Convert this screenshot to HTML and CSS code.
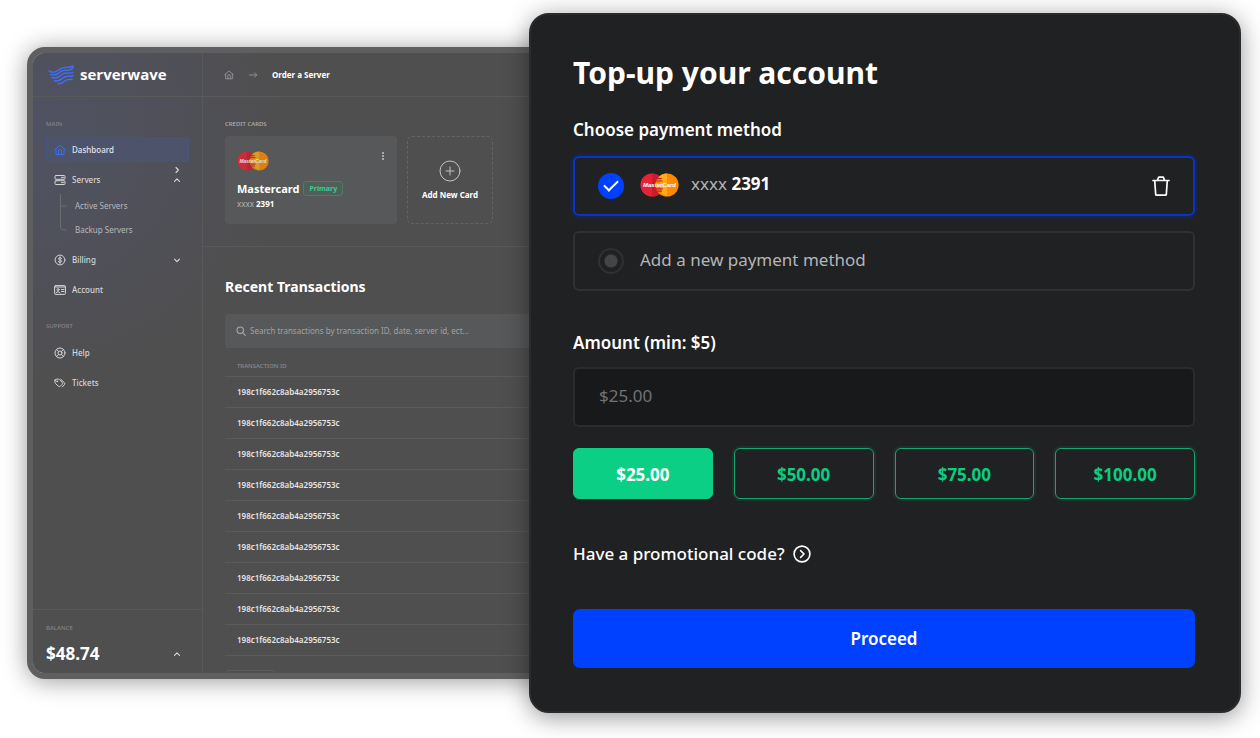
FILE: index.html
```html
<!DOCTYPE html>
<html lang="en">
<head>
<meta charset="utf-8">
<title>Serverwave – Top-up your account</title>
<link rel="stylesheet" href="styles.css">
</head>
<body>
<svg class="defs" aria-hidden="true">
  <symbol id="mastercard" viewBox="0 0 39 24">
    <circle cx="12" cy="12" r="11.6" fill="#e62335"/>
    <path d="M12 .4a11.6 11.6 0 0 1 0 23.2z" fill="#c81e2b"/>
    <circle cx="27" cy="12" r="11.6" fill="#ff8a00"/>
    <path d="M27 .4a11.6 11.6 0 0 0-8 3.2l3 16.9 5 3.1z" fill="#ffab1a"/>
    <path d="M17.300 5.600h4M16.300 8h6M16 15.800h6.300M17.300 18.200h4" stroke="#c81e2b" stroke-width="1.200"/>
    <text x="19.500" y="14.300" text-anchor="middle" class="mc-name">MasterCard</text>
  </symbol>
  <symbol id="home" viewBox="0 0 12 12"><path d="M.8 5.600 6 1.200l5.200 4.400M2 5v5.600h8V5M4.500 10.400V7a1.500 1.500 0 0 1 3 0v3.400"/></symbol>
  <symbol id="up" viewBox="0 0 10 10"><path d="M2.500 6.300 5 3.900l2.500 2.400"/></symbol>
</svg>
<div class="stage">
  <div class="dashboard">
    <aside class="sidebar">
      <a class="brand" href="#">
        <svg class="logo" viewBox="0 0 26 20"><path d="M1 6c4 2 7.200 1.500 10.200-1.500S18 3.500 25 1c0 2-1 3.500-3 3.800M2.500 9.300c3.800 1.500 7 .4 9.800-2.400C15.600 3.600 18.500 6.500 23.500 4.300M4 12.500c3.600 1.200 6.800.1 9.700-2.700C17 6.600 20 9.300 25 7.400M6.500 15.700c3 .8 6-.4 8.500-2.800 3.300-3.200 6-.8 10-2.200M10 18.700c2.400.4 4.600-.7 6.700-2.700 2.500-2.400 4.500-1.200 7.300-1.800"/></svg>
        <span class="wordmark">serverwave</span>
      </a>
      <nav class="menu">
        <h2 class="caption">MAIN</h2>
        <a class="item active" href="#"><svg class="icon"><use href="#home"/></svg><span>Dashboard</span></a>
        <a class="item" href="#">
          <svg class="icon" viewBox="0 0 12 12"><rect x="1" y="1.500" width="10" height="3.800" rx="1"/><rect x="1" y="6.700" width="10" height="3.800" rx="1"/><path d="M7.500 3.400h2M7.500 8.600h2"/></svg>
          <span>Servers</span>
          <span class="chevrons"><svg class="chev" viewBox="0 0 10 10"><path d="M4 2.500 6.400 5 4 7.500"/></svg><svg class="chev"><use href="#up"/></svg></span>
        </a>
        <div class="submenu">
          <svg class="branch" viewBox="0 0 8 40"><path d="M1.500 0v33q0 3 3 3H7M1.500 12H7"/></svg>
          <div class="sublinks"><a class="sub" href="#">Active Servers</a><a class="sub" href="#">Backup Servers</a></div>
        </div>
        <a class="item" href="#">
          <svg class="icon" viewBox="0 0 12 12"><circle cx="6" cy="6" r="4.900"/><path d="M7.600 4.500Q7 3.700 6 3.700c-2 0-2 2 0 2.300 2.200.3 2.200 2.400 0 2.400Q5 8.400 4.400 7.600M6 2.800v6.500"/></svg>
          <span>Billing</span><svg class="chev end" viewBox="0 0 10 10"><path d="M2.500 4.200 5 6.600l2.500-2.400"/></svg>
        </a>
        <a class="item" href="#">
          <svg class="icon" viewBox="0 0 12 12"><rect x=".6" y="1.600" width="10.800" height="8.800" rx=".8"/><path d="M.6 3h10.800M7.500 5.500H10M7.500 7.500H10"/><circle cx="4" cy="5.600" r="1"/><path d="M2 8.600q2-2.400 4 0"/></svg>
          <span>Account</span>
        </a>
        <h2 class="caption support">SUPPORT</h2>
        <a class="item" href="#">
          <svg class="icon" viewBox="0 0 12 12"><circle cx="6" cy="6" r="5"/><circle cx="6" cy="6" r="2"/><path d="m2.500 2.500 2 2m3 3 2 2m0-7-2 2m-3 3-2 2"/></svg>
          <span>Help</span>
        </a>
        <a class="item" href="#">
          <svg class="icon" viewBox="0 0 12 12"><path d="M1 3.200v2.300q0 .6.500 1l2.800 2.700q1 .9 2 0l1.900-1.900q.9-1 0-2L5.500 2.600q-.4-.4-1-.4H2q-1 0-1 1zM6.800 2.300l3.500 3.300q1 1 0 2.200L8.300 9.900"/><circle cx="3.100" cy="4.300" r=".5"/></svg>
          <span>Tickets</span>
        </a>
      </nav>
      <div class="balance">
        <h2 class="caption">BALANCE</h2>
        <div class="balance-row"><strong>$48.74</strong><svg class="chev end"><use href="#up"/></svg></div>
      </div>
    </aside>
    <main class="content">
      <nav class="crumbs">
        <svg class="crumb"><use href="#home"/></svg>
        <svg class="crumb" viewBox="0 0 12 12"><path d="M1.500 6h9M8 3.500 10.500 6 8 8.500"/></svg>
        <span>Order a Server</span>
      </nav>
      <section class="cards">
        <h2 class="caption light">CREDIT CARDS</h2>
        <div class="card-list">
          <article class="card">
            <div class="card-top"><svg class="mc-small" role="img" aria-label="MasterCard"><use href="#mastercard"/></svg>
              <button class="more" aria-label="Card options"><svg viewBox="0 0 4 8"><circle cx="2" cy="1" r=".9"/><circle cx="2" cy="4" r=".9"/><circle cx="2" cy="7" r=".9"/></svg></button></div>
            <div class="card-name"><strong>Mastercard</strong><span class="tag">Primary</span></div>
            <div class="card-number"><span>xxxx</span> <b>2391</b></div>
          </article>
          <button class="add-card">
            <svg viewBox="0 0 22 22"><circle cx="11" cy="11" r="10"/><path d="M11 7v8M7 11h8"/></svg>
            <span>Add New Card</span>
          </button>
        </div>
      </section>
      <section class="transactions">
        <h1>Recent Transactions</h1>
        <label class="search">
          <svg viewBox="0 0 10 10"><circle cx="4.200" cy="4.200" r="3.200"/><path d="m6.600 6.600 2.700 2.700"/></svg>
          <input type="search" aria-label="Search transactions" placeholder="Search transactions by transaction ID, date, server id, ect...">
        </label>
        <table>
          <thead><tr><th>TRANSACTION ID</th></tr></thead>
          <tbody>
            <tr><td>198c1f662c8ab4a2956753c</td></tr>
            <tr><td>198c1f662c8ab4a2956753c</td></tr>
            <tr><td>198c1f662c8ab4a2956753c</td></tr>
            <tr><td>198c1f662c8ab4a2956753c</td></tr>
            <tr><td>198c1f662c8ab4a2956753c</td></tr>
            <tr><td>198c1f662c8ab4a2956753c</td></tr>
            <tr><td>198c1f662c8ab4a2956753c</td></tr>
            <tr><td>198c1f662c8ab4a2956753c</td></tr>
            <tr><td>198c1f662c8ab4a2956753c</td></tr>
          </tbody>
        </table>
        <button class="pager" aria-label="Rows per page"></button>
      </section>
    </main>
  </div>

  <form class="modal">
    <h1>Top-up your account</h1>
    <fieldset class="methods">
      <legend>Choose payment method</legend>
      <div class="method selected">
        <input type="radio" name="method" id="saved" checked>
        <label for="saved"><svg class="mc-large" role="img" aria-label="MasterCard"><use href="#mastercard"/></svg><span class="masked"><span>xxxx</span> <b>2391</b></span></label>
        <button type="button" class="trash" aria-label="Delete card"><svg viewBox="0 0 18 20"><path d="M1 4.500h16M2.700 4.500l1 14a.8.8 0 0 0 .8.700h9a.8.8 0 0 0 .8-.7l1-14M5.500 4.300l.8-2.400a1 1 0 0 1 .9-.7h3.600a1 1 0 0 1 .9.700l.8 2.400"/></svg></button>
      </div>
      <div class="method">
        <input type="radio" name="method" id="new">
        <label for="new">Add a new payment method</label>
      </div>
    </fieldset>
    <label class="amount-label" for="amount">Amount (min: $5)</label>
    <input class="amount" id="amount" type="text" placeholder="$25.00">
    <div class="presets">
      <button type="button" class="preset chosen">$25.00</button>
      <button type="button" class="preset">$50.00</button>
      <button type="button" class="preset">$75.00</button>
      <button type="button" class="preset">$100.00</button>
    </div>
    <a class="promo" href="#">Have a promotional code? <svg viewBox="0 0 18 18"><circle cx="9" cy="9" r="7.900"/><path d="m7.600 5.600 3.400 3.400-3.400 3.400"/></svg></a>
    <button type="submit" class="proceed">Proceed</button>
  </form>
</div>
</body>
</html>
```
FILE: styles.css
```css
* { box-sizing: border-box; }
body { margin: 0; background: #fff; font-family: "Noto Sans", "Open Sans", sans-serif; color: #fff; }
h1, h2 { margin: 0; }
a { color: inherit; text-decoration: none; }
button, input { font: inherit; color: inherit; }
button { cursor: pointer; padding: 0; background: none; border: 0; }
svg { fill: none; stroke: currentColor; stroke-linecap: round; stroke-linejoin: round; flex: none; display: block; }
.defs { display: none; }
#mastercard { stroke: none; }
.mc-name { font: italic bold 6px "Liberation Sans", sans-serif; fill: #fff; stroke: none; }

.stage { display: grid; grid-template-columns: 502fr 712fr; padding: 13px 19px 25px 27px; }

/* dashboard window */
.dashboard {
  grid-area: 1 / 1 / 2 / 3; margin: 34px 60px 34px 0; height: 632px;
  display: grid; grid-template: minmax(0, 1fr) / 170px 1fr; overflow: hidden;
  border: 6px solid #5f5f61; border-radius: 18px; font-size: 8px;
  background: radial-gradient(circle at 0 80px, #4f5263 0, #4f4f4f 260px) #4f4f4f;
  background-clip: padding-box;
  background-color: #4f4f4f;
  box-shadow: 0 2px 24px rgba(0, 0, 0, .4);
}
.sidebar { display: flex; flex-direction: column; border-right: 1px solid #595959; min-height: 0; }
.brand { display: flex; align-items: center; gap: 6px; height: 44px; padding-left: 15px; border-bottom: 1px solid #595959; }
.logo { width: 26px; height: 20px; color: #3e6df5; stroke-width: 1.5; }
.wordmark { font: bold 15px/20px "Open Sans", sans-serif; padding-bottom: 2px; }
.menu { flex: 1; padding: 20px 13px 0; display: flex; flex-direction: column; gap: 5px; }
.caption { font-size: 6px; line-height: 14px; font-weight: 500; color: #858585; }
.caption.light { color: #b0b0b0; }
.menu .caption { height: 15px; }
.menu .support { margin-top: 12px; height: 16px; }
.item { display: flex; align-items: center; gap: 6px; height: 25px; padding: 0 7px 0 8px; font-weight: 500; color: #d6d6d8; border-radius: 3px; }
.item.active { background: #4c536b; box-shadow: inset 0 0 0 1px #49547c; color: #e4e5ea; }
.item.active .icon { color: #3e6df5; }
.icon { width: 12px; height: 12px; stroke-width: 1; }
.chev { width: 10px; height: 10px; stroke-width: 1.1; color: #dcdcdc; }
.chevrons { margin-left: auto; padding-bottom: 10px; }
.end { margin-left: auto; }
.submenu { display: flex; gap: 8px; height: 48px; margin-top: -3px; padding-left: 13px; }
.branch { width: 8px; height: 40px; color: #6d6e71; stroke-width: 1; }
.sublinks { line-height: 24px; color: #b7b8ba; }
.sub { display: block; }
.balance { height: 64px; padding: 11px 20px 0 13px; border-top: 1px solid #595959; }
.balance-row { display: flex; align-items: center; height: 38px; line-height: 36px; font-size: 17px; }

.content { min-width: 0; }
.crumbs { display: flex; align-items: center; gap: 14px; height: 44px; padding-left: 21px; border-bottom: 1px solid #595959; font-weight: 700; color: #fff; }
.crumb { width: 10px; height: 10px; color: #9a9a9a; stroke-width: 1; }
.cards { padding: 20px 22px 22px; border-bottom: 1px solid #595959; }
.card-list { display: flex; gap: 10px; margin-top: 5px; }
.card { width: 172px; height: 88px; padding: 15px 12px; border-radius: 4px; background: #575859; }
.card-top { display: flex; justify-content: space-between; height: 28px; }
.mc-small { width: 32px; height: 20px; opacity: .8; }
.more svg { width: 4px; height: 8px; fill: #d0d0d0; stroke: none; }
.more { align-self: flex-start; width: 4px; height: 10px; }
.card-name { display: flex; align-items: center; gap: 4px; height: 19px; font-size: 11px; }
.tag { padding: 0 5px; border: 1px solid #4a7c68; border-radius: 3px; background: #4e6059; color: #3ecb94; font-size: 7px; line-height: 13px; font-weight: 700; }
.card-number { line-height: 12px; color: #b5b6b8; }
.card-number b { color: #fff; }
.add-card { width: 86px; height: 88px; display: flex; flex-direction: column; align-items: center; justify-content: center; gap: 7px; border: 1px dashed #656565; border-radius: 5px; font-weight: 700; }
.add-card svg { width: 22px; height: 22px; color: #c4c4c4; stroke-width: 1; }
.add-card span { line-height: 12px; }
.transactions { padding: 28px 22px 0; }
.transactions h1 { font: bold 14px/24px "Noto Sans", sans-serif; }
.search { display: flex; align-items: center; gap: 4px; height: 34px; margin-top: 15px; padding-left: 11px; background: #575859; border-radius: 3px; color: #a8a9aa; }
.search svg { width: 10px; height: 10px; stroke-width: 1.1; }
.search input { flex: 1; border: 0; padding: 0 0 2px; background: none; outline: 0; }
.search input::placeholder { color: #a1a2a4; opacity: 1; }
table { width: 100%; margin-top: 8px; border-collapse: collapse; text-align: left; }
th { height: 20px; padding: 0 12px; font-size: 6px; font-weight: 500; color: #8c8c8c; border-bottom: 1px solid #5b5b5b; }
td { height: 31px; padding: 0 12px; font-weight: 600; color: #e6e6e6; border-bottom: 1px solid #5b5b5b; }
.pager { display: block; width: 50px; height: 20px; margin-top: 14px; border: 1px solid #5b5b5b; border-radius: 3px; }

/* top-up dialog */
.modal {
  grid-area: 1 / 2; position: relative; display: flex; flex-direction: column;
  padding: 38px 44px 43px 42px; border: 2px solid #2a2b2c; border-radius: 20px; background: #202122;
  box-shadow: 0 4px 24px rgba(0, 0, 0, .42); font-size: 17px; line-height: 24px;
}
.modal h1 { font: bold 30px/40px "Noto Sans", sans-serif; }
.methods { display: flex; flex-direction: column; gap: 15px; margin: 25px 0 0; padding: 0; border: 0; min-width: 0; }
legend { padding: 0 0 14px; font-weight: 600; }
.method { display: flex; align-items: center; height: 60px; padding: 0 23px; border: 2px solid #303132; border-radius: 6px; color: #b4b5b9; }
.method.selected { border-color: #0a35c4; box-shadow: 0 0 0 3px #1a2340; }
.method input { appearance: none; flex: none; width: 26px; height: 26px; margin: 0 16px 0 0; border-radius: 50%; border: 2px solid #303132; background: radial-gradient(circle, #444546 6px, transparent 7px); }
.method input:checked { border: 0; background: #0040ff; display: grid; place-items: center; }
.method input:checked::after { content: ""; width: 12px; height: 6px; margin-bottom: 4px; border: solid #fff; border-width: 0 0 2px 2px; transform: rotate(-45deg); }
.method label { flex: 1; display: flex; align-items: center; gap: 12px; padding-bottom: 2px; }
.mc-large { width: 39px; height: 24px; }
.masked { padding-bottom: 2px; }
.masked b { color: #fff; }
.trash { width: 18px; height: 20px; color: #fff; }
.trash svg { width: 18px; height: 20px; stroke-width: 1.7; }
.amount-label { margin-top: 40px; font-weight: 600; }
.amount { width: 100%; height: 60px; margin-top: 12px; padding: 0 24px 4px; border: 2px solid #2b2c2d; border-radius: 6px; background: #18191a; }
.amount::placeholder { color: #717274; opacity: 1; }
.presets { display: grid; grid-template-columns: repeat(4, 1fr); gap: 21px; margin-top: 21px; }
.preset { height: 51px; padding-top: 2px; border: 1px solid #14a870; border-radius: 6px; box-shadow: 0 0 0 2px #20302b; color: #0bce83; font-weight: 700; }
.preset.chosen { background: #0bcf84; border-color: #0bcf84; box-shadow: none; color: #fff; }
.promo { display: flex; align-items: center; gap: 8px; align-self: flex-start; margin-top: 43px; font-weight: 500; }
.promo svg { width: 18px; height: 18px; stroke-width: 1.6; }
.proceed { height: 59px; margin-top: 43px; border-radius: 7px; background: #0040ff; font-weight: 600; }
```
